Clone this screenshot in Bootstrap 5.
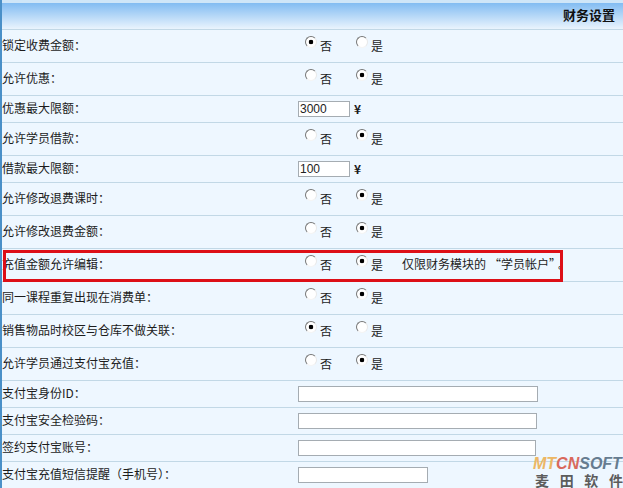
<!DOCTYPE html>
<html lang="zh-CN">
<head>
<meta charset="utf-8">
<title>财务设置</title>
<link href="https://cdn.jsdelivr.net/npm/bootstrap@5.3.0/dist/css/bootstrap.min.css" rel="stylesheet">
<style>
html,body{height:488px;overflow:hidden}
body{background:#eef7ff;color:#1c1c1c;font:12px/1 "Noto Sans CJK SC","Liberation Sans",sans-serif}
.sheet{position:relative;width:623px;height:488px;overflow:hidden;border-left:2px solid #4a90c8}
.top-band{height:3px;background:#cfe6f8}
.head-bar{height:27px;padding:5px 8px 0 0;background:linear-gradient(#82bcf2,#eaf4fd);border-bottom:1px solid #c2d8e6;font-weight:700;font-size:13px;line-height:14px;text-align:right;color:#111}
.fin-row{height:33px;border-bottom:1px solid #c2d8e6}
.fin-row.short{height:27px}
.fin-label{width:296px;flex:none;padding-bottom:3px}
.fin-value{flex:none;padding-left:7px}
.short .fin-value{padding-left:0}
.opt{width:51px;flex:none;margin:0;gap:3px;position:relative;top:-1px}
.opt span{position:relative;top:1px}
.fake-radio{appearance:none;width:12px;height:12px;margin:0;border-radius:50%;flex:none;position:relative;top:-3px;background:#fff;border:1px solid;border-color:#777 #e8e8e8 #f4f4f4 #777}
.fake-radio:checked{background:radial-gradient(circle,#000 0 2px,#fff 2.6px)}
.note{margin-left:-5px;position:relative;top:-1px}
.quoted{margin-left:3px;margin-right:3px}
.field{height:16px;padding:0 1px;border:1px solid #a5acb2;border-radius:0;background:#fff;font:12px/14px "Liberation Sans",sans-serif;color:#222;outline:0}
.w-num{width:52px}.w-240{width:240px}.w-239{width:239px}.w-238{width:238px}.w-130{width:130px}
.unit{margin-left:4px;font-weight:700;font-size:12px}
.red-frame{position:absolute;left:1px;top:250px;width:560px;height:32px;border:3px solid #dd0f17}
.mark-logo{position:absolute;left:531px;top:456px;width:92px;line-height:1}
.mark-en{font:italic 700 16px/16px "Liberation Sans",sans-serif;white-space:nowrap}
.mark-en b{color:#ecb765}.mark-en i{color:#d9695c}.mark-en u{color:#667c90;text-decoration:none}
.mark-cn{font-weight:700;font-size:14px;line-height:14px;color:#5c5c5c;white-space:nowrap;margin-top:1px;padding:0 2px}
</style>
</head>
<body>
<div class="sheet">
  <div class="top-band"></div>
  <div class="head-bar">财务设置</div>

  <div class="fin-row d-flex align-items-center"><div class="fin-label">锁定收费金额：</div><div class="fin-value d-flex align-items-center">
    <label class="opt d-flex align-items-center"><input class="fake-radio" type="radio" name="a" checked><span>否</span></label>
    <label class="opt d-flex align-items-center"><input class="fake-radio" type="radio" name="a"><span>是</span></label></div></div>

  <div class="fin-row d-flex align-items-center"><div class="fin-label">允许优惠：</div><div class="fin-value d-flex align-items-center">
    <label class="opt d-flex align-items-center"><input class="fake-radio" type="radio" name="b"><span>否</span></label>
    <label class="opt d-flex align-items-center"><input class="fake-radio" type="radio" name="b" checked><span>是</span></label></div></div>

  <div class="fin-row short d-flex align-items-center"><div class="fin-label">优惠最大限额：</div><div class="fin-value d-flex align-items-center">
    <input class="field w-num" type="text" value="3000"><span class="unit">¥</span></div></div>

  <div class="fin-row d-flex align-items-center"><div class="fin-label">允许学员借款：</div><div class="fin-value d-flex align-items-center">
    <label class="opt d-flex align-items-center"><input class="fake-radio" type="radio" name="c"><span>否</span></label>
    <label class="opt d-flex align-items-center"><input class="fake-radio" type="radio" name="c" checked><span>是</span></label></div></div>

  <div class="fin-row short d-flex align-items-center"><div class="fin-label">借款最大限额：</div><div class="fin-value d-flex align-items-center">
    <input class="field w-num" type="text" value="100"><span class="unit">¥</span></div></div>

  <div class="fin-row d-flex align-items-center"><div class="fin-label">允许修改退费课时：</div><div class="fin-value d-flex align-items-center">
    <label class="opt d-flex align-items-center"><input class="fake-radio" type="radio" name="d"><span>否</span></label>
    <label class="opt d-flex align-items-center"><input class="fake-radio" type="radio" name="d" checked><span>是</span></label></div></div>

  <div class="fin-row d-flex align-items-center"><div class="fin-label">允许修改退费金额：</div><div class="fin-value d-flex align-items-center">
    <label class="opt d-flex align-items-center"><input class="fake-radio" type="radio" name="e"><span>否</span></label>
    <label class="opt d-flex align-items-center"><input class="fake-radio" type="radio" name="e" checked><span>是</span></label></div></div>

  <div class="fin-row d-flex align-items-center"><div class="fin-label">充值金额允许编辑：</div><div class="fin-value d-flex align-items-center">
    <label class="opt d-flex align-items-center"><input class="fake-radio" type="radio" name="f"><span>否</span></label>
    <label class="opt d-flex align-items-center"><input class="fake-radio" type="radio" name="f" checked><span>是</span></label>
    <span class="note">仅限财务模块的<span class="quoted">“学员帐户”</span>。</span></div></div>

  <div class="fin-row d-flex align-items-center"><div class="fin-label">同一课程重复出现在消费单：</div><div class="fin-value d-flex align-items-center">
    <label class="opt d-flex align-items-center"><input class="fake-radio" type="radio" name="g"><span>否</span></label>
    <label class="opt d-flex align-items-center"><input class="fake-radio" type="radio" name="g" checked><span>是</span></label></div></div>

  <div class="fin-row d-flex align-items-center"><div class="fin-label">销售物品时校区与仓库不做关联：</div><div class="fin-value d-flex align-items-center">
    <label class="opt d-flex align-items-center"><input class="fake-radio" type="radio" name="h" checked><span>否</span></label>
    <label class="opt d-flex align-items-center"><input class="fake-radio" type="radio" name="h"><span>是</span></label></div></div>

  <div class="fin-row d-flex align-items-center"><div class="fin-label">允许学员通过支付宝充值：</div><div class="fin-value d-flex align-items-center">
    <label class="opt d-flex align-items-center"><input class="fake-radio" type="radio" name="i"><span>否</span></label>
    <label class="opt d-flex align-items-center"><input class="fake-radio" type="radio" name="i" checked><span>是</span></label></div></div>

  <div class="fin-row short d-flex align-items-center"><div class="fin-label">支付宝身份ID：</div><div class="fin-value d-flex align-items-center"><input class="field w-240" type="text"></div></div>
  <div class="fin-row short d-flex align-items-center"><div class="fin-label">支付宝安全检验码：</div><div class="fin-value d-flex align-items-center"><input class="field w-239" type="text"></div></div>
  <div class="fin-row short d-flex align-items-center"><div class="fin-label">签约支付宝账号：</div><div class="fin-value d-flex align-items-center"><input class="field w-238" type="text"></div></div>
  <div class="fin-row short d-flex align-items-center"><div class="fin-label">支付宝充值短信提醒（手机号）：</div><div class="fin-value d-flex align-items-center"><input class="field w-130" type="text"></div></div>

  <div class="red-frame"></div>
  <div class="mark-logo">
    <div class="mark-en"><b>MT</b><i>CN</i><u>SOFT</u></div>
    <div class="mark-cn d-flex justify-content-between"><span>麦</span><span>田</span><span>软</span><span>件</span></div>
  </div>
</div>
<script src="https://cdn.jsdelivr.net/npm/bootstrap@5.3.0/dist/js/bootstrap.bundle.min.js"></script>
</body>
</html>
